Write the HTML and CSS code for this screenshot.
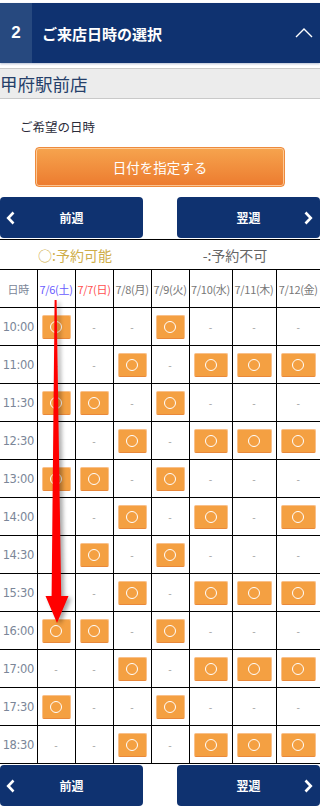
FILE: index.html
```html
<!DOCTYPE html>
<html lang="ja">
<head>
    <meta charset="UTF-8">
    <meta name="viewport" content="width=device-width, initial-scale=1.0">
    <title>ご来店日時の選択</title>
    <link rel="stylesheet" href="styles.css">
</head>
<body>
    <div class="page">
        <div class="step-head">
            <span class="step-num">2</span>
            <h2 class="step-title">ご来店日時の選択</h2>
            <svg class="toggle" width="18" height="10" viewBox="0 0 18 10"><polyline points="1,9 9,1 17,9" fill="none" stroke="#fff" stroke-width="1.4"/></svg>
        </div>

        <div class="shop-name">甲府駅前店</div>

        <p class="label">ご希望の日時</p>
        <div class="date-wrap">
            <button class="date-btn">日付を指定する</button>
        </div>

        <div class="week-nav">
            <a class="week-btn prev">
                <svg class="chev" width="10" height="14" viewBox="0 0 10 14"><polyline points="7.5,1.5 2.2,7 7.5,12.5" fill="none" stroke="#fff" stroke-width="2.6"/></svg>
                前週
            </a>
            <a class="week-btn next">
                翌週
                <svg class="chev" width="10" height="14" viewBox="0 0 10 14"><polyline points="2.5,1.5 7.8,7 2.5,12.5" fill="none" stroke="#fff" stroke-width="2.6"/></svg>
            </a>
        </div>

        <div class="legend">
            <span class="ok">○:予約可能</span>
            <span class="ng">-:予約不可</span>
        </div>

        <table class="slots">
            <colgroup>
                <col style="width:37px"><col style="width:38px"><col style="width:38px"><col style="width:38px">
                <col style="width:38px"><col style="width:43px"><col style="width:44px"><col style="width:44px">
            </colgroup>
            <thead>
                <tr>
                    <th class="time">日時</th>
                    <th class="sat">7/6(土)</th>
                    <th class="sun">7/7(日)</th>
                    <th>7/8(月)</th>
                    <th>7/9(火)</th>
                    <th>7/10(水)</th>
                    <th>7/11(木)</th>
                    <th>7/12(金)</th>
                </tr>
            </thead>
            <tbody id="slot-body"></tbody>
        </table>

        <div class="week-nav bottom">
            <a class="week-btn prev">
                <svg class="chev" width="10" height="14" viewBox="0 0 10 14"><polyline points="7.5,1.5 2.2,7 7.5,12.5" fill="none" stroke="#fff" stroke-width="2.6"/></svg>
                前週
            </a>
            <a class="week-btn next">
                翌週
                <svg class="chev" width="10" height="14" viewBox="0 0 10 14"><polyline points="2.5,1.5 7.8,7 2.5,12.5" fill="none" stroke="#fff" stroke-width="2.6"/></svg>
            </a>
        </div>

        <!-- 注釈の矢印 -->
        <svg class="arrow" width="320" height="808" viewBox="0 0 320 808">
            <polygon points="54.6,300 56.6,300 61.2,596 68.5,596 57,623 45.5,596 51.6,596" fill="#ff0000"/>
        </svg>
    </div>

    <script>
        // 1 = 予約可能, 0 = 予約不可
        const slots = [
            ['10:00', '1001000'],
            ['11:00', '0010111'],
            ['11:30', '1101000'],
            ['12:30', '0010111'],
            ['13:00', '1101000'],
            ['14:00', '0010101'],
            ['14:30', '0101000'],
            ['15:30', '0010111'],
            ['16:00', '1101000'],
            ['17:00', '0010111'],
            ['17:30', '1001000'],
            ['18:30', '0010111']
        ];

        const body = document.getElementById('slot-body');
        slots.forEach(([time, flags]) => {
            let html = '<tr><td class="time">' + time + '</td>';
            for (const f of flags) {
                html += f === '1'
                    ? '<td><span class="slot-btn"><i class="ring"></i></span></td>'
                    : '<td class="none">-</td>';
            }
            body.insertAdjacentHTML('beforeend', html + '</tr>');
        });
    </script>
</body>
</html>
```

FILE: styles.css
```css
body {
    margin: 0;
    font-family: "Noto Sans CJK JP", "Noto Sans", sans-serif;
    background: #fff;
    color: #333;
}
.page {
    position: relative;
    width: 320px;
    padding-top: 3px;
}
.step-head {
    display: flex;
    align-items: center;
    height: 60px;
    background: #0f3270;
    box-shadow: 0 1px 2px rgba(40, 70, 130, 0.35);
}
.step-num {
    width: 32px;
    height: 60px;
    line-height: 60px;
    text-align: center;
    background: #27497f;
    color: #fff;
    font-family: "Liberation Sans", Arial, sans-serif;
    font-weight: bold;
    font-size: 17px;
}
.step-title {
    flex: 1;
    margin: 0 0 0 10px;
    color: #fff;
    font-size: 15px;
    font-weight: bold;
}
.toggle {
    margin-right: 7px;
}
.shop-name {
    margin-top: 5px;
    height: 29px;
    line-height: 29px;
    background: #ececec;
    border-top: 1px solid #c9c9c9;
    border-bottom: 1px solid #c9c9c9;
    color: #253f6a;
    font-size: 17.5px;
}
.label {
    margin: 18px 0 0 20px;
    line-height: 20px;
    font-size: 12.5px;
    color: #2b2b3a;
}
.date-wrap {
    margin-top: 10px;
    padding-left: 35px;
}
.date-btn {
    display: block;
    width: 250px;
    height: 40px;
    border: 1px solid #ee8a3c;
    border-radius: 4px;
    background: linear-gradient(#f6a44e, #ec7b2f);
    box-shadow: inset 0 0 0 1px rgba(255, 214, 170, 0.8);
    color: #fff;
    font-family: inherit;
    font-size: 13.5px;
}
.week-nav {
    display: flex;
    justify-content: space-between;
    margin-top: 10px;
    padding-bottom: 1px;
    border-bottom: 1px solid #000;
}
.week-nav.bottom {
    margin-top: 1px;
    border-bottom: none;
}
.week-btn {
    position: relative;
    display: flex;
    align-items: center;
    justify-content: center;
    width: 143px;
    height: 41px;
    background: #0f3270;
    border-radius: 4px;
    color: #fff;
    font-size: 12px;
    font-weight: bold;
}
.week-btn.next {
    width: 143px;
}
.week-btn .chev {
    position: absolute;
    top: 14px;
}
.week-btn.prev .chev {
    left: 6px;
}
.week-btn.next .chev {
    right: 7px;
}
.legend {
    display: flex;
    height: 29px;
    align-items: center;
    font-size: 14px;
}
.legend .ok {
    width: 150px;
    text-align: center;
    color: #cfae4a;
}
.legend .ng {
    width: 170px;
    text-align: center;
    color: #666;
}
.slots {
    width: 320px;
    table-layout: fixed;
    border-collapse: collapse;
}
.slots th,
.slots td {
    height: 37px;
    padding: 0;
    border: 1px solid #000;
    text-align: center;
    vertical-align: middle;
    white-space: nowrap;
}
.slots tr > :first-child {
    border-left: none;
}
.slots tr > :last-child {
    border-right: none;
}
.slots th {
    font-weight: normal;
    font-size: 11px;
    letter-spacing: -0.3px;
    color: #777;
}
.slots th.sat {
    color: #6a5cff;
}
.slots th.sun {
    color: #ff5050;
}
.slots td.time {
    font-family: "DejaVu Sans", sans-serif;
    font-size: 11.5px;
    letter-spacing: -0.4px;
    color: #7b8698;
}
.slots th.time {
    color: #7b8698;
}
.slots td.none {
    font-size: 10px;
    color: #999;
}
.slot-btn {
    display: flex;
    align-items: center;
    justify-content: center;
    height: 22px;
    margin: 0 4px;
    background: #f4a042;
    border: 1px solid #f9c08a;
    border-bottom-color: #e9883a;
    border-radius: 2px;
}
.ring {
    width: 10px;
    height: 10px;
    border: 1px solid #fff;
    border-radius: 50%;
}
.arrow {
    position: absolute;
    top: 0;
    left: 0;
    pointer-events: none;
    filter: drop-shadow(3px 2px 2px rgba(0, 0, 0, 0.35));
}
```
